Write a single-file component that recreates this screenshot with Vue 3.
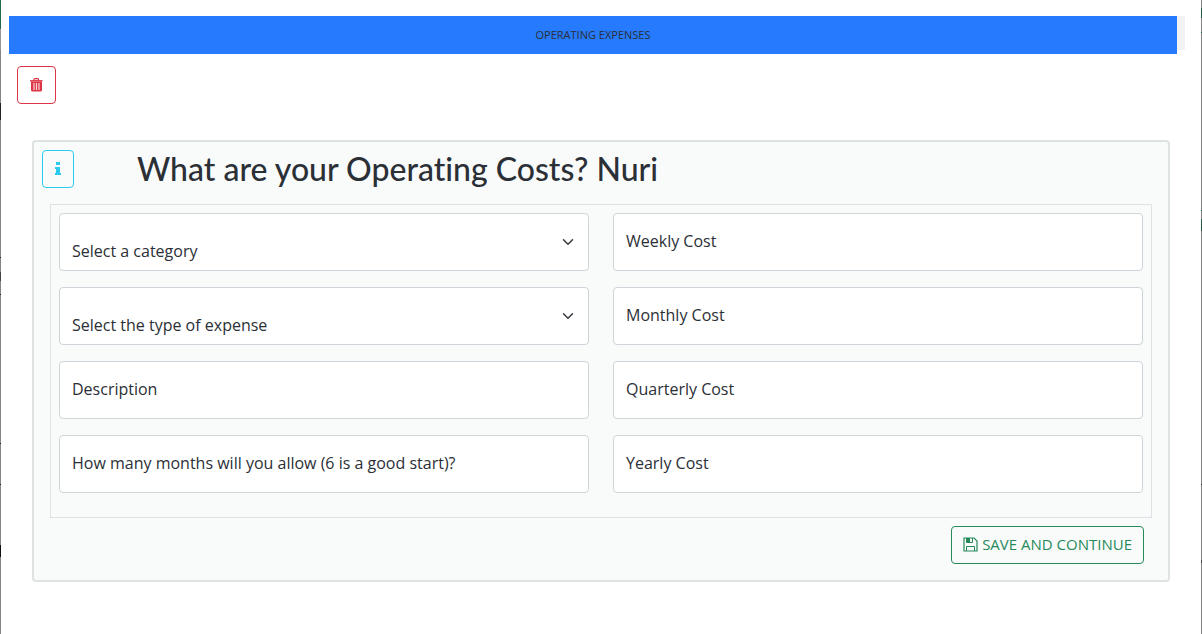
<script setup>
import { reactive } from 'vue'

const selects = [
  { id: 'category', label: 'Select a category' },
  { id: 'type', label: 'Select the type of expense' },
]
const details = [
  { id: 'description', label: 'Description' },
  { id: 'months', label: 'How many months will you allow (6 is a good start)?' },
]
const costs = [
  { id: 'weekly', label: 'Weekly Cost' },
  { id: 'monthly', label: 'Monthly Cost' },
  { id: 'quarterly', label: 'Quarterly Cost' },
  { id: 'yearly', label: 'Yearly Cost' },
]
const form = reactive({ category: '', type: '' })
</script>

<template>
  <div class="page">
    <div class="edge edge-left"></div>
    <main class="content">
      <div class="track"><div class="bar">OPERATING EXPENSES</div></div>
      <div class="toolbar">
        <button type="button" class="btn danger" aria-label="Delete">
          <svg width="13" height="14" viewBox="0 0 13 14" fill="none" stroke="currentColor">
            <path d="M4 2.500V1.500Q4 .7 4.800 .7H7.700Q8.500 .7 8.500 1.500V2.500" stroke-width="1.200" />
            <path d="M0 2.800H12.500" stroke-width="1.400" />
            <path d="M1 3.500H12V12Q12 13.500 10.500 13.500H2.500Q1 13.500 1 12Z" fill="currentColor" stroke="none" />
            <path d="M4 5V12M6.500 5V12M9 5V12" stroke="#fff" stroke-width="1.200" opacity=".8" />
          </svg>
        </button>
      </div>
      <form class="card" @submit.prevent>
        <header class="head">
          <button type="button" class="btn info" aria-label="Information">
            <svg width="6" height="14" viewBox="0 0 6 14" fill="currentColor">
              <path d="M1 0H5V3H1ZM0 5H5V11H6V13H0V11H1V7H0Z" />
            </svg>
          </button>
          <h1>What are your Operating Costs? Nuri</h1>
        </header>
        <div class="fields">
          <div class="column">
            <div v-for="s in selects" :key="s.id" class="field">
              <select :id="s.id" v-model="form[s.id]" :aria-label="s.label">
                <option value="">{{ s.label }}</option>
              </select>
              <svg class="chevron" width="12" height="12" viewBox="0 0 16 16" fill="none" stroke="#343a40" stroke-width="2" stroke-linecap="round" stroke-linejoin="round">
                <path d="M2 5l6 6 6-6" />
              </svg>
            </div>
            <div v-for="f in details" :key="f.id" class="field">
              <input :id="f.id" type="text" placeholder=" " />
              <label :for="f.id">{{ f.label }}</label>
            </div>
          </div>
          <div class="column">
            <div v-for="f in costs" :key="f.id" class="field">
              <input :id="f.id" type="text" placeholder=" " />
              <label :for="f.id">{{ f.label }}</label>
            </div>
          </div>
        </div>
        <footer class="actions">
          <button type="submit" class="btn save">
            <svg width="15" height="15" viewBox="0 0 15 15" fill="none" stroke="currentColor">
              <path d="M1 1H11L14 4V14H1Z" stroke-width="1.200" />
              <path d="M3.500 1V5.500H9.500V1M3.500 14V9.500H11.500V14" />
              <path d="M3.500 1H7V5.500H3.500Z" fill="currentColor" stroke="none" />
            </svg>
            <span>SAVE AND CONTINUE</span>
          </button>
        </footer>
      </form>
    </main>
    <div class="edge edge-right"></div>
  </div>
</template>

<style>
body {
  margin: 0;
  background: #fff;
}
</style>

<style scoped>
* {
  box-sizing: border-box;
}
.page {
  display: flex;
  min-height: 100vh;
  color: #2b2f36;
  font: 16px/24px "Trebuchet MS", "Open Sans", sans-serif;
}
.edge {
  flex: 0 0 1px;
  background: #858585;
}
.edge-left {
  background: linear-gradient(#1f6b4a 0 29px, #999 29px 50px, #858585 50px 103px, #222 103px 120px, #858585 120px 257px, #222 257px 258px, #858585 258px 272px, #444 272px 281px, #858585 281px 294px, #222 294px 295px, #858585 295px 443px, #222 443px 444px, #858585 444px 484px, #222 484px 485px, #858585 485px 545px, #111 545px 557px, #858585 557px);
}
.edge-right {
  background: linear-gradient(#858585 0 8px, #1f5b45 8px 18px, #858585 18px 32px, #1f5b45 32px 33px, #858585 33px 210px, #1f5b45 210px 211px, #858585 211px 219px, #1f5b45 219px 231px, #858585 231px 484px, #222 484px 485px, #858585 485px 560px, #444 560px 563px, #858585 563px);
}
.content {
  flex: 1;
  min-width: 0;
  padding: 16px 16px 16px 8px;
}
.track {
  height: 34px;
  padding-right: 8px;
  background: #f2f2f2;
}
.bar {
  height: 38px;
  background: #267afd;
  font-size: 11px;
  font-weight: 500;
  line-height: 38px;
  text-align: center;
}
.toolbar {
  display: flex;
  padding: 16px 8px 0;
}
.btn {
  display: flex;
  align-items: center;
  justify-content: center;
  gap: 4px;
  height: 38px;
  padding: 0 11px;
  border: 1px solid currentColor;
  border-radius: 4px;
  background: transparent;
  font: inherit;
}
.danger {
  width: 39px;
  color: #dc3545;
}
.info {
  width: 32px;
  color: #2bcaf0;
}
.save {
  padding-bottom: 2px;
  color: #26895a;
  font-size: 15px;
}
.card {
  margin: 36px 15px 0 23px;
  padding: 8px 16px 16px;
  border: 2px solid #dfe2e3;
  border-radius: 4px;
  background: #f9fbfa;
}
.head {
  display: flex;
  gap: 63px;
  margin-left: -8px;
}
h1 {
  margin: 0;
  font-family: "Trebuchet MS", Lato, sans-serif;
  font-size: 32px;
  font-weight: 500;
  font-variant-ligatures: none;
  line-height: 38px;
}
.fields {
  display: grid;
  grid-template-columns: 1fr 1fr;
  gap: 24px;
  margin-top: 16px;
  padding: 8px 8px 24px;
  border: 1px solid #dee2e6;
}
.column {
  display: grid;
  gap: 16px;
  min-width: 0;
}
.field {
  display: grid;
}
.field > * {
  grid-area: 1 / 1;
}
input,
select {
  width: 100%;
  height: 58px;
  margin: 0;
  padding: 16px 12px;
  border: 1px solid #ced4da;
  border-radius: 4px;
  background: #fff;
  color: inherit;
  font: inherit;
}
select {
  appearance: none;
  padding: 25px 36px 7px 12px;
}
label {
  align-self: start;
  margin: 16px 13px 0;
  pointer-events: none;
}
input:not(:placeholder-shown) + label {
  margin-top: 0;
  font-size: 12px;
}
.chevron {
  place-self: center end;
  margin-right: 15px;
  pointer-events: none;
}
.actions {
  display: flex;
  justify-content: flex-end;
  padding: 8px 8px 0;
}
</style>
